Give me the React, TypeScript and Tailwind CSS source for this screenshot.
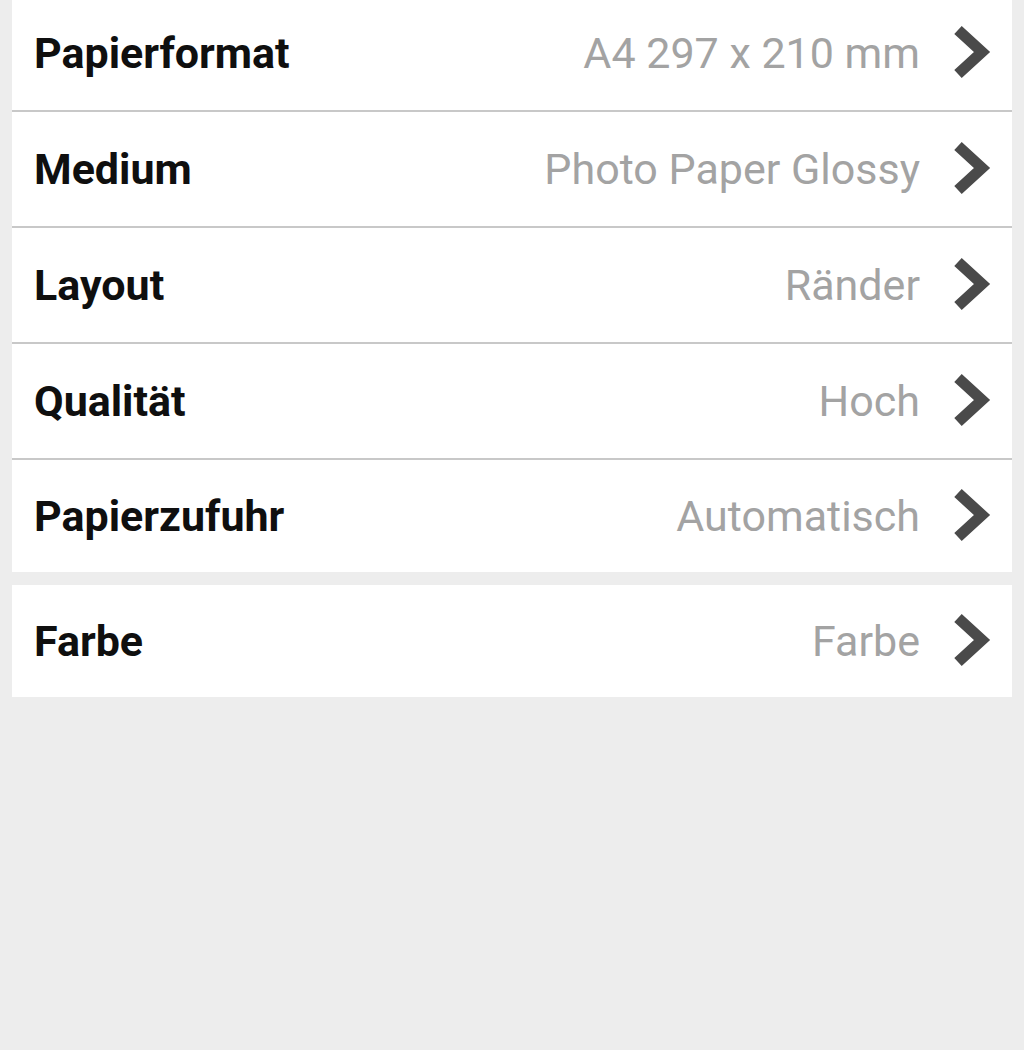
const groups: { label: string; value: string }[][] = [
  [
    { label: 'Papierformat', value: 'A4 297 x 210 mm' },
    { label: 'Medium', value: 'Photo Paper Glossy' },
    { label: 'Layout', value: 'Ränder' },
    { label: 'Qualität', value: 'Hoch' },
    { label: 'Papierzufuhr', value: 'Automatisch' },
  ],
  [{ label: 'Farbe', value: 'Farbe' }],
];

function Chevron() {
  return (
    <svg width="40" height="56" viewBox="0 0 40 56" className="shrink-0">
      <polyline
        points="6,5 30,27 6,49"
        fill="none"
        stroke="#4a4a4a"
        strokeWidth="11"
        strokeLinejoin="miter"
        strokeLinecap="butt"
      />
    </svg>
  );
}

export default function App() {
  return (
    <div
      className="min-h-[1050px] w-full overflow-hidden bg-[#ededed] px-[12px]"
      style={{ fontFamily: 'Roboto, "Noto Sans", sans-serif' }}
    >
      <div className="-mt-[4px] flex flex-col gap-[13px]">
        {groups.map((rows, gi) => (
          <div key={gi} className="bg-white">
            {rows.map((r, i) => {
              const last = i === rows.length - 1;
              return (
                <div
                  key={r.label}
                  className={
                    'flex items-center pl-[22px] pr-[20px] ' +
                    (last ? 'h-[112px]' : 'h-[116px] border-b-2 border-[#c8c8c8]')
                  }
                >
                  <span className="flex-1 text-[43px] font-bold text-[#0f0f0f]">{r.label}</span>
                  <span className="mr-[32px] text-[43px] text-[#a3a3a3]">{r.value}</span>
                  <Chevron />
                </div>
              );
            })}
          </div>
        ))}
      </div>
    </div>
  );
}
